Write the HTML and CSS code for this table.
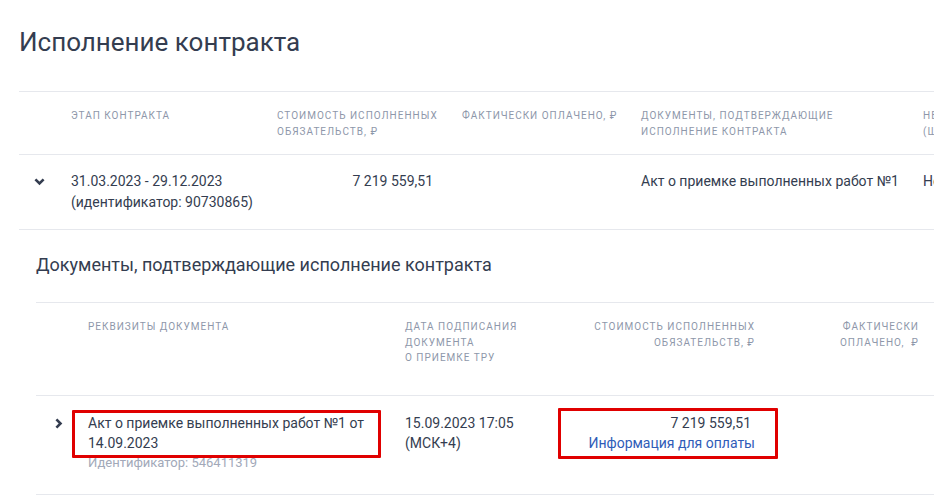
FILE: index.html
```html
<!DOCTYPE html>
<html lang="ru">
<head>
<meta charset="utf-8">
<title>Исполнение контракта</title>
<link rel="stylesheet" href="styles.css">
</head>
<body>
<div class="page">
  <h1 class="title">Исполнение контракта</h1>

  <div class="table stages">
    <div class="row head">
      <div class="cell"></div>
      <div class="cell">Этап контракта</div>
      <div class="cell">Стоимость исполненных<br>обязательств, ₽</div>
      <div class="cell">Фактически оплачено, ₽</div>
      <div class="cell">Документы, подтверждающие<br>исполнение контракта</div>
      <div class="cell">Неисполненные<br>(штрафы, пени), ₽</div>
    </div>
    <div class="row data">
      <div class="cell toggle">
        <svg class="chev-down" width="11" height="8" viewBox="0 0 11 8"><polyline points="1.4,1.4 5.5,5.5 9.6,1.4" fill="none" stroke="#343d50" stroke-width="2.6"/></svg>
      </div>
      <div class="cell">31.03.2023 - 29.12.2023<br>(идентификатор: 90730865)</div>
      <div class="cell num">7 219 559,51</div>
      <div class="cell"></div>
      <div class="cell">Акт о приемке выполненных работ №1</div>
      <div class="cell">Нет</div>
    </div>
  </div>

  <div class="docs">
    <h2 class="subtitle">Документы, подтверждающие исполнение контракта</h2>
    <div class="table documents">
      <div class="row head">
        <div class="cell"></div>
        <div class="cell">Реквизиты документа</div>
        <div class="cell">Дата подписания<br>документа<br>о приемке ТРУ</div>
        <div class="cell right cost">Стоимость исполненных<br>обязательств, ₽</div>
        <div class="cell right paid">Фактически<br>оплачено,&nbsp; ₽</div>
        <div class="cell"></div>
      </div>
      <div class="row data">
        <div class="cell toggle">
          <svg class="chev-right" width="8" height="11" viewBox="0 0 8 11"><polyline points="1.4,1.4 5.5,5.5 1.4,9.6" fill="none" stroke="#343d50" stroke-width="2.6"/></svg>
        </div>
        <div class="cell doc">
          <div class="doc-name marked">Акт о приемке выполненных работ №1 от 14.09.2023</div>
          <div class="doc-id">Идентификатор: 546411319</div>
        </div>
        <div class="cell">15.09.2023 17:05<br>(МСК+4)</div>
        <div class="cell cost-cell">
          <div class="cost-box marked">
            <div class="cost-value">7 219 559,51</div>
            <a class="pay-link" href="#">Информация для оплаты</a>
          </div>
        </div>
        <div class="cell"></div>
        <div class="cell"></div>
      </div>
    </div>
  </div>
</div>
</body>
</html>
```

FILE: styles.css
```css
html, body {
  margin: 0;
  padding: 0;
}

body {
  width: 934px;
  height: 504px;
  overflow: hidden;
  background: #ffffff;
  color: #343d50;
  font-family: Roboto, "Noto Sans", "Liberation Sans", sans-serif;
}

.page {
  padding-left: 19px;
}

.title {
  margin: 0 0 34px;
  padding-top: 27px;
  font-size: 26px;
  font-weight: 400;
  line-height: 30px;
  color: #343d50;
}

.table {
  border-top: 1px solid #e6e8ed;
}

.row {
  display: grid;
  border-bottom: 1px solid #e6e8ed;
}

.stages .row {
  grid-template-columns: 52px 206px 185px 179px 282px 200px;
}

.documents .row {
  grid-template-columns: 52px 317px 153px 220px 165px 100px;
}

.head .cell {
  font-size: 10px;
  line-height: 16px;
  letter-spacing: 1px;
  text-transform: uppercase;
  color: #8e97aa;
  white-space: nowrap;
}

.stages .head {
  padding: 16px 0 14px;
}

.stages .data {
  padding: 16px 0 16px;
  font-size: 14px;
  line-height: 21px;
}

.cell {
  min-width: 0;
  white-space: nowrap;
}

.num {
  text-align: right;
  padding-right: 29px;
}

.chev-down {
  display: block;
  margin: 7px 0 0 15px;
}

.chev-right {
  display: block;
  margin: 5px 0 0 19px;
}

.docs {
  padding-left: 17px;
}

.subtitle {
  margin: 23px 0 25px;
  font-size: 18px;
  font-weight: 400;
  line-height: 24px;
  color: #343d50;
}

.documents .head {
  padding: 16px 0 29px;
}

.documents .head .cell {
  line-height: 15.5px;
}

.right {
  text-align: right;
}

.cost {
  padding-right: 23px;
}

.paid {
  padding-right: 24px;
}

.documents .data {
  padding: 17px 0 21px;
  font-size: 14px;
  line-height: 20px;
}

.doc {
  padding-right: 24px;
  white-space: normal;
}

.doc-name {
  position: relative;
}

.doc-id {
  font-size: 13px;
  color: #a2a9b9;
}

.cost-box {
  position: relative;
  padding-right: 23px;
  text-align: right;
}

.cost-value {
  padding-right: 4px;
}

.pay-link {
  color: #2f5cb8;
  text-decoration: none;
}

.marked::after {
  content: "";
  position: absolute;
  border: 3px solid #e00000;
  border-radius: 1px;
  pointer-events: none;
}

.doc-name.marked::after {
  top: -3px;
  bottom: -5px;
  left: -16px;
  right: 0;
}

.cost-box.marked::after {
  top: -5px;
  bottom: -6px;
  left: 0;
  right: 0;
}
```
